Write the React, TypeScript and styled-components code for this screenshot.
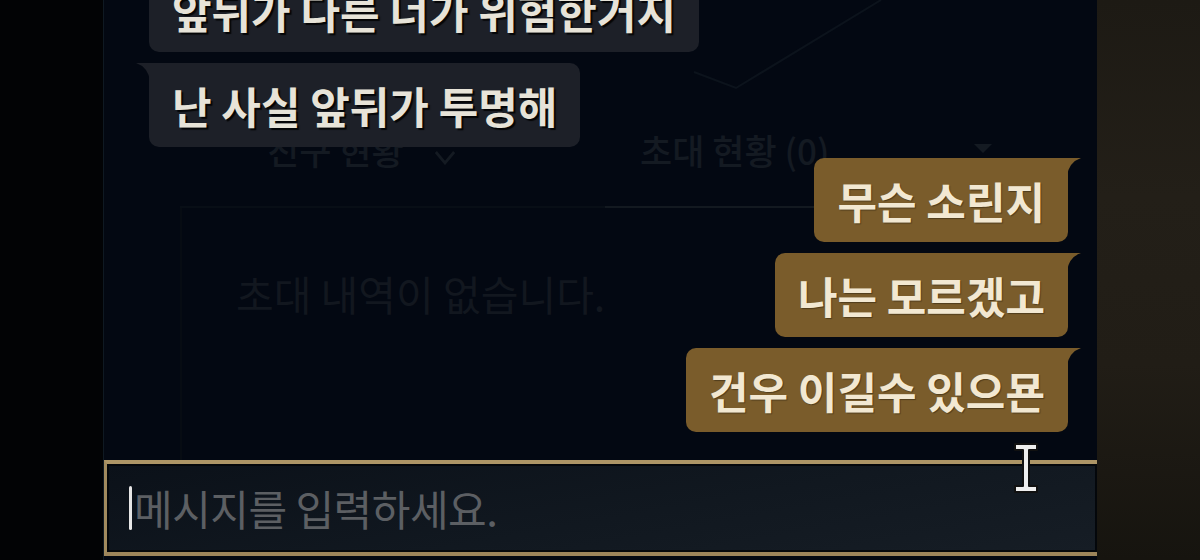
import styled, { createGlobalStyle } from "styled-components";

type Side = "left" | "right";

const messages: { id: number; side: Side; text: string }[] = [
    { id: 1, side: "left", text: "앞뒤가 다른 너가 위험한거지" },
    { id: 2, side: "left", text: "난 사실 앞뒤가 투명해" },
    { id: 3, side: "right", text: "무슨 소린지" },
    { id: 4, side: "right", text: "나는 모르겠고" },
    { id: 5, side: "right", text: "건우 이길수 있으묜" },
];

export default function App() {
    return (
        <>
            <GlobalStyle />
            <Page>
                <Gutter />
                <Panel>
                    <Stage>
                        {/* 뒤에 비치는 초대 창 */}
                        <Backdrop>
                            <EmblemRow>
                                <svg width="200" height="92" viewBox="0 0 200 92">
                                    <path d="M3 72 L45 88 L190 0" fill="none" stroke="#0c131c" strokeWidth="2" />
                                </svg>
                            </EmblemRow>
                            <Tabs>
                                <Tab $width={425} $padLeft={87}>
                                    <span>친구 현황</span>
                                    <Chevron viewBox="0 0 24 16"><path d="M2 2 L12 14 L22 2" fill="none" stroke="#141a22" strokeWidth="3" /></Chevron>
                                </Tab>
                                <Tab $width={395} $padLeft={35} $active $spread>
                                    <span>초대 현황 (0)</span>
                                    <Arrow />
                                </Tab>
                            </Tabs>
                            <EmptyBox>
                                <EmptyText>초대 내역이 없습니다.</EmptyText>
                            </EmptyBox>
                        </Backdrop>

                        <ChatLayer>
                            {messages.map((m) => (
                                <Bubble key={m.id} $side={m.side}>{m.text}</Bubble>
                            ))}
                        </ChatLayer>
                    </Stage>

                    <InputBar>
                        <Caret />
                        <Placeholder>메시지를 입력하세요.</Placeholder>
                    </InputBar>

                    <IBeam width="26" height="52" viewBox="0 0 26 52">
                        <path
                            d="M2 2 H24 V8 H16 V44 H24 V50 H2 V44 H10 V8 H2 Z"
                            fill="#eeeeee"
                            stroke="#111111"
                            strokeWidth="2"
                            strokeLinejoin="round"
                        />
                    </IBeam>
                </Panel>
                <Gutter $right />
            </Page>
        </>
    );
}

const GlobalStyle = createGlobalStyle`
    html, body {
        margin: 0;
        padding: 0;
        background: #020304;
        overflow: hidden;
    }
    body {
        font-family: "Noto Sans CJK KR", "Noto Sans", sans-serif;
    }
`;

const Page = styled.div`
    display: flex;
    width: 1200px;
    height: 560px;
    overflow: hidden;
`;

const Gutter = styled.div<{ $right?: boolean }>`
    width: 103px;
    flex-shrink: 0;
    background: ${({ $right }) =>
        $right
            ? "linear-gradient(180deg, #1d1a14 0%, #231f18 35%, #211d16 65%, #16140f 100%)"
            : "#020305"};
`;

const Panel = styled.div`
    position: relative;
    width: 994px;
    flex-shrink: 0;
    display: flex;
    flex-direction: column;
    background: #030812;
    border-left: 1px solid #0f1922;
    box-sizing: border-box;
`;

const Stage = styled.div`
    position: relative;
    flex: 1;
    overflow: hidden;
`;

const Backdrop = styled.div`
    display: flex;
    flex-direction: column;
    padding: 0 96px 0 76px;
    color: #141a22;
`;

const EmblemRow = styled.div`
    height: 128px;
    padding-left: 511px;
    svg {
        display: block;
    }
`;

const Tabs = styled.div`
    display: flex;
    height: 78px;
    border-bottom: 2px solid #080e16;
`;

const Tab = styled.div<{ $width: number; $padLeft: number; $active?: boolean; $spread?: boolean }>`
    display: flex;
    align-items: flex-start;
    justify-content: ${({ $spread }) => ($spread ? "space-between" : "flex-start")};
    gap: 30px;
    box-sizing: border-box;
    width: ${({ $width }) => $width}px;
    padding: 2px 8px 0 ${({ $padLeft }) => $padLeft}px;
    margin-bottom: -2px;
    border-bottom: 2px solid ${({ $active }) => ($active ? "#131920" : "transparent")};
    font-size: 35px;
    font-weight: 500;
    line-height: 40px;
`;

const Chevron = styled.svg`
    width: 22px;
    height: 15px;
    margin-top: 20px;
`;

const Arrow = styled.span`
    width: 0;
    height: 0;
    margin-top: 14px;
    border-left: 9px solid transparent;
    border-right: 9px solid transparent;
    border-top: 9px solid #141a22;
`;

const EmptyBox = styled.div`
    height: 260px;
    padding: 62px 0 0 54px;
    border-left: 2px solid #070c13;
    box-sizing: border-box;
`;

const EmptyText = styled.p`
    margin: 0;
    font-size: 41px;
    line-height: 46px;
    color: #12171f;
`;

const ChatLayer = styled.div`
    position: absolute;
    inset: 0;
    display: flex;
    flex-direction: column;
    justify-content: flex-end;
    gap: 11px;
    padding: 0 29px 28px 45px;
`;

const Bubble = styled.div<{ $side: Side }>`
    position: relative;
    flex-shrink: 0;
    align-self: ${({ $side }) => ($side === "left" ? "flex-start" : "flex-end")};
    display: flex;
    align-items: center;
    height: 84px;
    padding: 0 23px;
    box-sizing: border-box;
    white-space: nowrap;
    font-size: 43px;
    font-weight: 700;
    line-height: 1;
    border-radius: ${({ $side }) => ($side === "left" ? "0 10px 10px 10px" : "10px 0 10px 10px")};
    background: ${({ $side }) => ($side === "left" ? "#1d2028" : "#7a5c2b")};
    color: ${({ $side }) => ($side === "left" ? "#e7e3d8" : "#f2e8d2")};
    text-shadow: ${({ $side }) =>
        $side === "left" ? "2px 2px 1px rgba(0, 0, 0, 0.85)" : "1px 1px 1px rgba(0, 0, 0, 0.35)"};

    &::before {
        content: "";
        position: absolute;
        top: 0;
        width: 14px;
        height: 18px;
        background: inherit;
        ${({ $side }) =>
            $side === "left"
                ? `left: -13px; clip-path: path("M0 0 L14 0 L14 18 Q12 4 0 0 Z");`
                : `right: -13px; clip-path: path("M14 0 L0 0 L0 18 Q2 4 14 0 Z");`}
    }
`;

const InputBar = styled.div`
    display: flex;
    align-items: center;
    gap: 2px;
    height: 96px;
    margin-bottom: 4px;
    padding-left: 22px;
    box-sizing: border-box;
    border-top: 4px solid #ad9566;
    border-bottom: 4px solid #9c845a;
    border-left: 3px solid #a18a5e;
    box-shadow: inset 0 0 0 2px #04070b;
    background: linear-gradient(170deg, #0b1119 0%, #111820 55%, #161d25 100%);
`;

const Caret = styled.span`
    width: 3px;
    height: 44px;
    border-radius: 2px;
    background: #e6e6e6;
`;

const Placeholder = styled.span`
    font-size: 42px;
    font-weight: 400;
    line-height: 1;
    color: #5c5f63;
    letter-spacing: -0.5px;
`;

const IBeam = styled.svg`
    position: absolute;
    left: 909px;
    top: 442px;
`;
